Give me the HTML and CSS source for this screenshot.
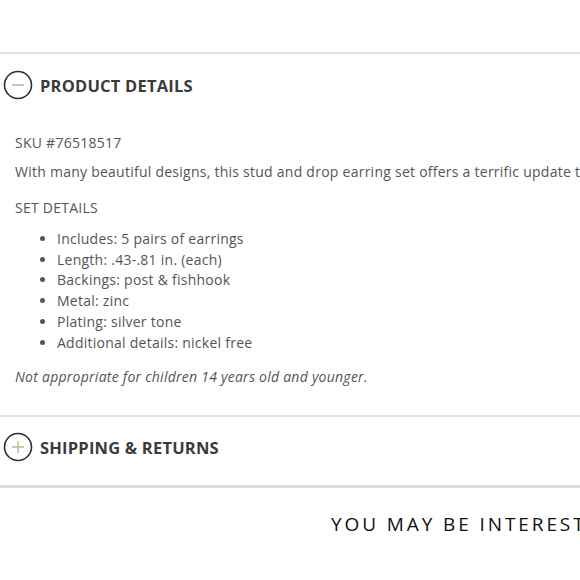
FILE: index.html
```html
<!DOCTYPE html>
<html lang="en">
<head>
<meta charset="utf-8">
<title>Product details</title>
<link rel="stylesheet" href="styles.css">
</head>
<body>
<div class="page">
  <div class="top-space"></div>
  <section class="accordion open">
    <div class="acc-header">
      <span class="toggle">
        <svg width="30" height="30" viewBox="0 0 30 30"><circle cx="15" cy="15" r="13.5" fill="none" stroke="#2f2f2f" stroke-width="1.6"/><line x1="9" y1="15" x2="21" y2="15" stroke="#a9cb98" stroke-width="1.6"/></svg>
      </span>
      <h2 class="acc-title">PRODUCT DETAILS</h2>
    </div>
    <div class="acc-body">
      <p class="sku">SKU #76518517</p>
      <p class="desc">With many beautiful designs, this stud and drop earring set offers a terrific update to your jewelry collection.</p>
      <p class="set">SET DETAILS</p>
      <ul class="features">
        <li>Includes: 5 pairs of earrings</li>
        <li>Length: .43-.81 in. (each)</li>
        <li>Backings: post &amp; fishhook</li>
        <li>Metal: zinc</li>
        <li>Plating: silver tone</li>
        <li>Additional details: nickel free</li>
      </ul>
      <p class="note">Not appropriate for children 14 years old and younger.</p>
    </div>
  </section>
  <section class="accordion closed">
    <div class="acc-header">
      <span class="toggle">
        <svg width="30" height="30" viewBox="0 0 30 30"><circle cx="15" cy="15" r="13.5" fill="none" stroke="#2f2f2f" stroke-width="1.6"/><line x1="9" y1="15" x2="21" y2="15" stroke="#a9cb98" stroke-width="1.6"/><line x1="15" y1="9" x2="15" y2="21" stroke="#a9cb98" stroke-width="1.6"/></svg>
      </span>
      <h2 class="acc-title">SHIPPING &amp; RETURNS</h2>
    </div>
  </section>
  <div class="interest">
    <h3>YOU MAY BE INTERESTED IN</h3>
  </div>
</div>
</body>
</html>
```
FILE: styles.css
```css
html, body {
  margin: 0;
  padding: 0;
  background: #ffffff;
}
body {
  width: 580px;
  height: 580px;
  overflow: hidden;
  font-family: "Open Sans", "DejaVu Sans", sans-serif;
  color: #555555;
}
.page {
  display: flex;
  flex-direction: column;
}
.top-space {
  height: 52px;
}
.accordion {
  border-top: 2px solid #e2e2e2;
}
.accordion.closed {
  border-bottom: 3px solid #dcdcdc;
}
.acc-header {
  display: flex;
  align-items: center;
  gap: 7px;
  padding: 16px 0 16px 3px;
}
.closed .acc-header {
  padding: 15px 0 23px 3px;
}
.toggle {
  display: flex;
  width: 30px;
  height: 30px;
}
.acc-title {
  margin: 0;
  font-size: 16.5px;
  font-weight: 700;
  color: #3b3b3b;
  letter-spacing: 0.2px;
  white-space: nowrap;
}
.acc-body {
  padding: 17px 0 28px 15px;
  font-size: 14px;
  line-height: 20px;
  letter-spacing: 0.25px;
  white-space: nowrap;
}
.acc-body p {
  margin: 0;
}
.sku {
  margin-bottom: 9px !important;
}
.desc {
  margin-bottom: 16px !important;
}
.set {
  margin-bottom: 11px !important;
}
.features {
  margin: 0 0 14px 0;
  padding-left: 42px;
  line-height: 20.7px;
}
.note {
  font-style: italic;
}
.interest {
  padding: 23px 0 0 331px;
}
.interest h3 {
  margin: 0;
  font-size: 19px;
  font-weight: 500;
  letter-spacing: 2.9px;
  color: #111111;
  white-space: nowrap;
}
```
